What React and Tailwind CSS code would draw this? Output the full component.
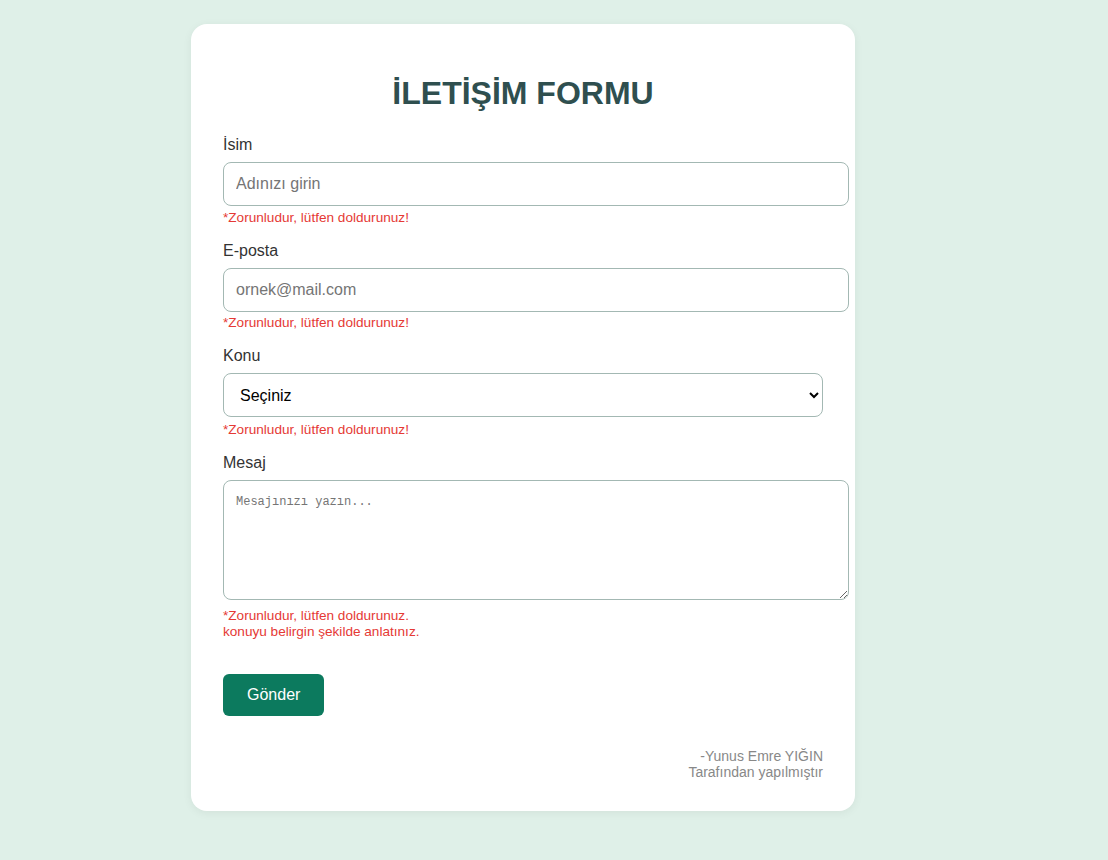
import React, { useState } from 'react';

const ERR = 'mt-[3.5px] text-[13.6px] leading-[16px] text-[#e53935]';
const LABEL = 'block mb-2 text-[16px] leading-[18px] text-[#333]';
const FIELD = 'h-[44px] rounded-lg border border-[#a3b8b3] bg-white px-3 text-[16px] outline-none';

export default function App() {
  const [form, setForm] = useState({ name: '', email: '', subject: '', message: '' });

  const handleChange = (e) => {
    const { name, value } = e.target;
    setForm(f => ({ ...f, [name]: value }));
  };

  return (
    <div className="min-h-[860px] bg-[#dff0e8] pt-6 pl-[191px] font-['Liberation_Sans',Arial,sans-serif]">
      <div className="w-[664px] rounded-2xl bg-white px-8 pt-8 pb-[31px] shadow-[0_2px_10px_rgba(0,0,0,0.06)]">
        <h2 className="mt-[19px] mb-[24px] text-center text-[32px] leading-[37px] font-bold text-[#2f4f4f]">
          İLETİŞİM FORMU
        </h2>

        <form onSubmit={e => e.preventDefault()}>
          {/* İsim */}
          <div className="mb-4">
            <label className={LABEL}>İsim</label>
            <input type="text" name="name" value={form.name} onChange={handleChange} placeholder="Adınızı girin" className={`${FIELD} w-[626px] placeholder:text-[#757575]`} />
            <p className={ERR}>*Zorunludur, lütfen doldurunuz!</p>
          </div>

          {/* E-posta */}
          <div className="mb-4">
            <label className={LABEL}>E-posta</label>
            <input type="email" name="email" value={form.email} onChange={handleChange} placeholder="ornek@mail.com" className={`${FIELD} w-[626px] placeholder:text-[#757575]`} />
            <p className={ERR}>*Zorunludur, lütfen doldurunuz!</p>
          </div>

          {/* Konu */}
          <div className="mb-4">
            <label className={LABEL}>Konu</label>
            <select name="subject" value={form.subject} onChange={handleChange} className={`${FIELD} w-[600px] text-black`}>
              <option value="">Seçiniz</option>
              <option value="oneri">Öneri</option>
              <option value="sikayet">Şikayet</option>
              <option value="diger">Diğer</option>
            </select>
            <p className="mt-[4.5px] text-[13.6px] leading-[16px] text-[#e53935]">*Zorunludur, lütfen doldurunuz!</p>
          </div>

          {/* Mesaj */}
          <div className="mb-4">
            <label className={LABEL}>Mesaj</label>
            <textarea name="message" value={form.message} onChange={handleChange} placeholder="Mesajınızı yazın..." className="block h-[120px] w-[626px] rounded-lg border border-[#a3b8b3] bg-white p-3 font-['Liberation_Mono',monospace] text-[12px] outline-none placeholder:text-[#757575]" />
            <p className="mt-[8px] text-[13.6px] leading-[16px] text-[#e53935]">
              *Zorunludur, lütfen doldurunuz.<br />
              konuyu belirgin şekilde anlatınız.
            </p>
          </div>

          <button type="submit" className="mt-[18px] h-[42px] rounded-md bg-[#0c7a5e] px-6 text-[16px] text-white">
            Gönder
          </button>
        </form>

        <div className="mt-8 text-right text-[14px] leading-[16px] text-[#888]">
          <p>-Yunus Emre YIĞIN</p>
          <p>Tarafından yapılmıştır</p>
        </div>
      </div>
    </div>
  );
}
